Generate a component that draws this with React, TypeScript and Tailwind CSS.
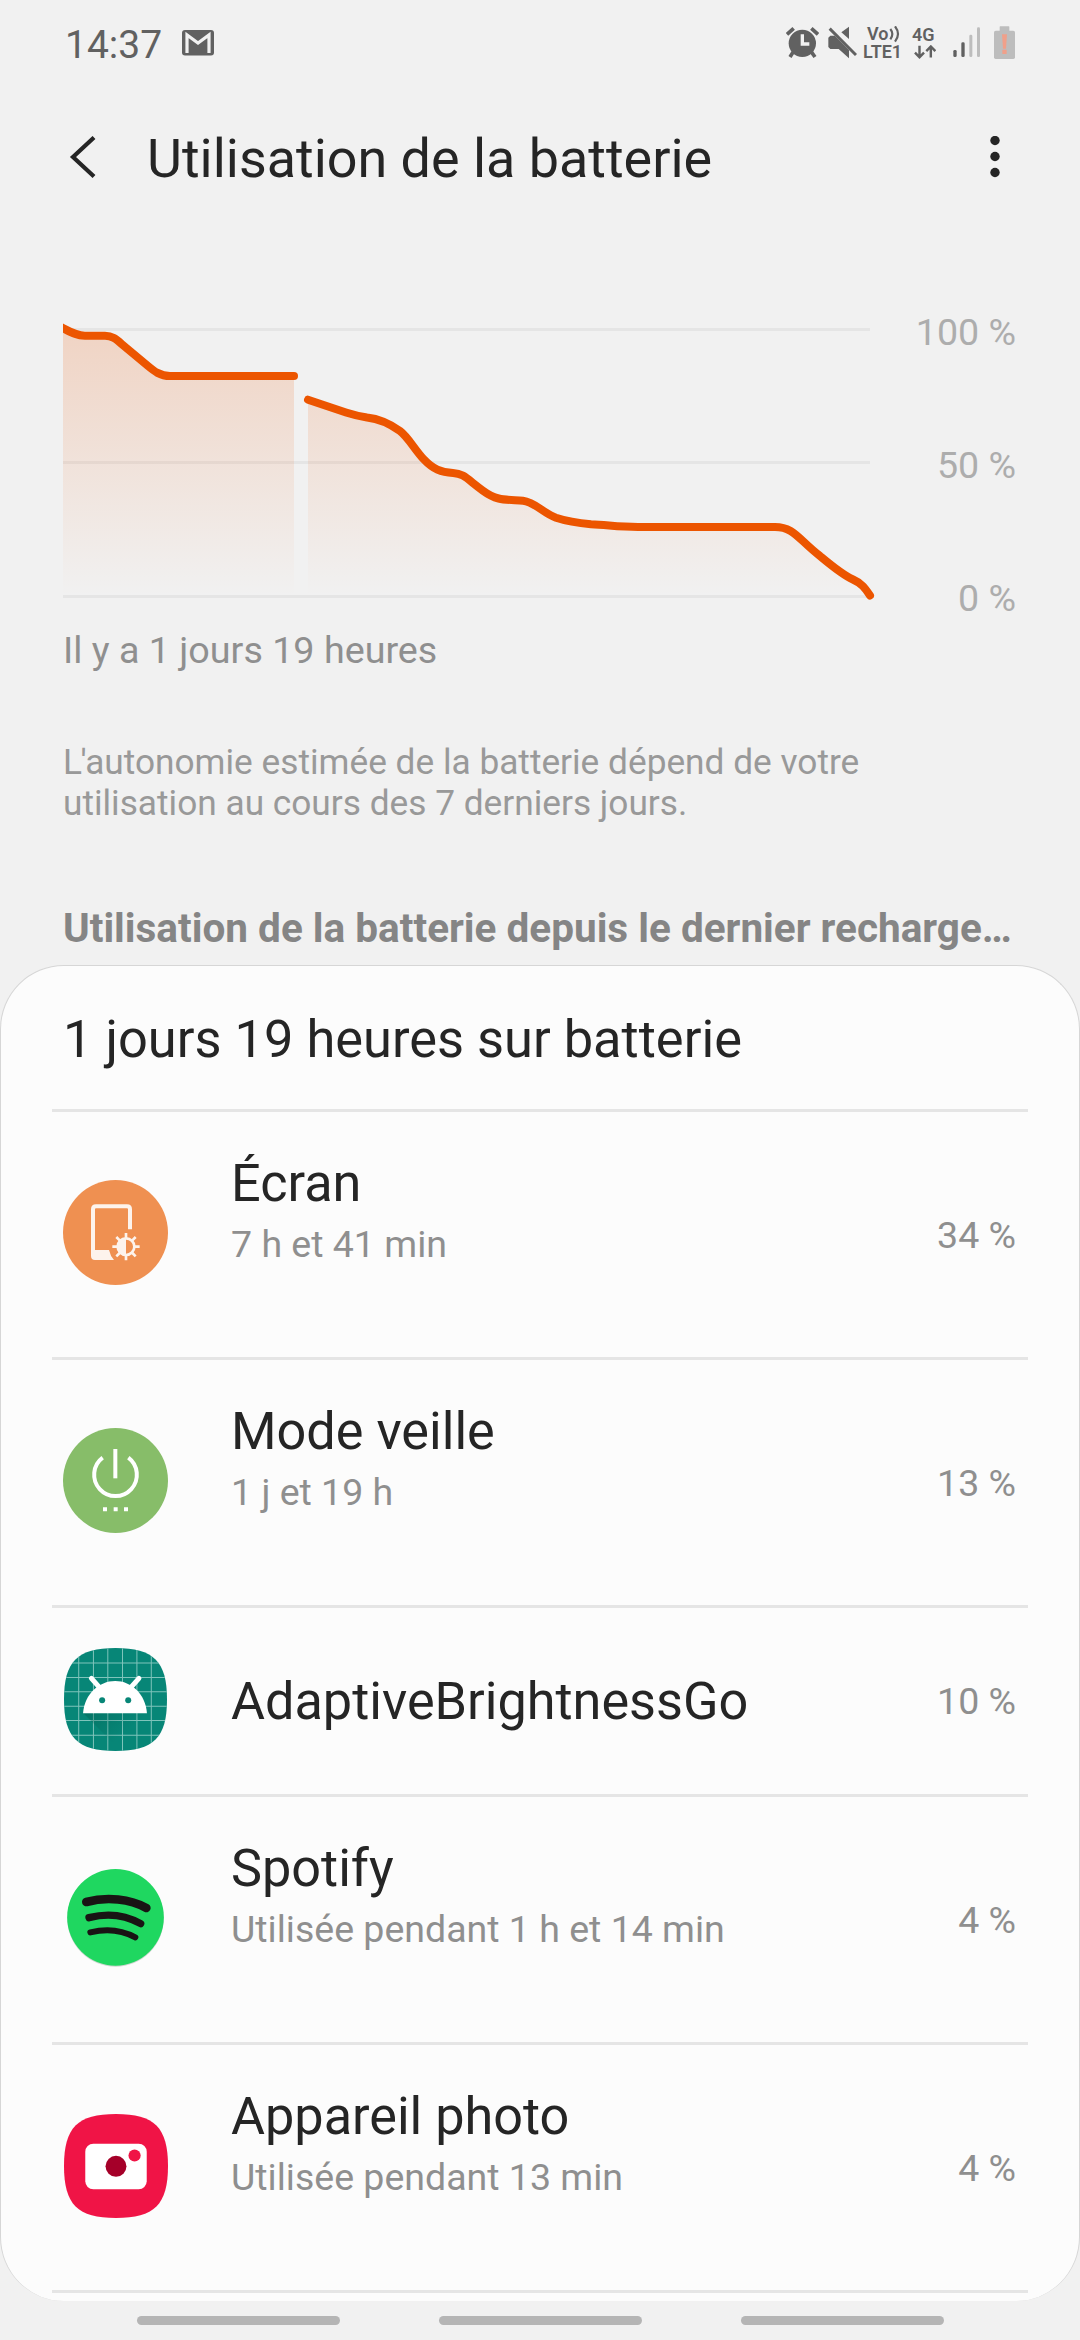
import type { ReactNode } from "react";

interface UsageItem {
  name: string;
  detail?: string;
  percent: string;
  icon: ReactNode;
}

const SQUIRCLE = "M154 0C268 0 308 40 308 154S268 308 154 308S0 268 0 154S40 0 154 0Z";

const ScreenIcon = () => (
  <svg width="105" height="105" viewBox="0 0 315 315" fill="none">
    <circle cx="157.5" cy="157.5" r="157.5" fill="#ef9051" />
    <path d="M201 148V88Q201 79 192 79H99Q90 79 90 88V228" stroke="#fdf3ec" strokeWidth="12" />
    <path d="M84 210H138Q142 228 153 240H96Q84 240 84 228Z" fill="#fdf3ec" />
    <g stroke="#fdf3ec" strokeWidth="8">
      <path d="M189 159V173M189 227V241M148 200H162M216 200H230M160 171L170 181M208 219L218 229M218 171L208 181M170 219L160 229" />
      <circle cx="189" cy="200" r="25" />
    </g>
    <path d="M189 175A25 25 0 0 0 189 225Z" fill="#fdf3ec" />
  </svg>
);

const StandbyIcon = () => (
  <svg width="105" height="105" viewBox="0 0 315 315" fill="none">
    <circle cx="157.5" cy="157.5" r="157.5" fill="#87bd69" />
    <path d="M157 63V151" stroke="#fff" strokeWidth="12" />
    <path d="M119 89A64 64 0 1 0 196 89" stroke="#fff" strokeWidth="12" />
    <path d="M120 238h12v12h-12zM152 238h12v12h-12zM183 238h12v12h-12z" fill="#fff" />
  </svg>
);

const AndroidIcon = () => (
  <svg width="103" height="103" viewBox="0 0 308 308" fill="none">
    <defs>
      <clipPath id="android-clip">
        <path d={SQUIRCLE} />
      </clipPath>
      <linearGradient id="android-shadow" x1="60" y1="195" x2="140" y2="290" gradientUnits="userSpaceOnUse">
        <stop stopColor="#00594c" stopOpacity="0.4" />
        <stop offset="1" stopColor="#00594c" stopOpacity="0" />
      </linearGradient>
    </defs>
    <g clipPath="url(#android-clip)">
      <rect width="308" height="308" fill="#078677" />
      <path
        d="M44 0V308M88 0V308M131 0V308M175 0V308M218 0V308M261 0V308M0 45H308M0 88H308M0 131H308M0 174H308M0 217H308M0 261H308"
        stroke="#7fc4bb"
        strokeWidth="3"
      />
      <path d="M58 195L170 308H308V256L248 195Z" fill="url(#android-shadow)" />
    </g>
    <path d="M57 195C61 139 104 99 153 99S244 139 248 195Z" fill="#fff" />
    <path d="M82 91L108 120M224 91L198 120" stroke="#fff" strokeWidth="15" strokeLinecap="round" />
    <circle cx="114" cy="156" r="9" fill="#078677" />
    <circle cx="192" cy="156" r="9" fill="#078677" />
  </svg>
);

const SpotifyIcon = () => (
  <svg width="97" height="99" viewBox="0 -3 291 297" fill="none">
    <circle cx="145.5" cy="148" r="145" fill="#cfd6d1" />
    <circle cx="145.5" cy="145" r="145" fill="#1fd760" />
    <g stroke="#191414" strokeLinecap="round">
      <path d="M58 99C120 82 190 90 238 117" strokeWidth="26" />
      <path d="M66 146C120 132 175 138 221 164" strokeWidth="22" />
      <path d="M70 190C118 178 165 183 205 205" strokeWidth="18" />
    </g>
  </svg>
);

const CameraIcon = () => (
  <svg width="104" height="104" viewBox="0 0 308 308">
    <path d={SQUIRCLE} fill="#f01446" />
    <rect x="63" y="88" width="182" height="135" rx="24" fill="#fff" />
    <circle cx="154" cy="155" r="31" fill="#a50029" />
    <circle cx="209" cy="123" r="18" fill="#f01446" />
  </svg>
);

const usageItems: UsageItem[] = [
  { name: "Écran", detail: "7 h et 41 min", percent: "34 %", icon: <ScreenIcon /> },
  { name: "Mode veille", detail: "1 j et 19 h", percent: "13 %", icon: <StandbyIcon /> },
  { name: "AdaptiveBrightnessGo", percent: "10 %", icon: <AndroidIcon /> },
  { name: "Spotify", detail: "Utilisée pendant 1 h et 14 min", percent: "4 %", icon: <SpotifyIcon /> },
  { name: "Appareil photo", detail: "Utilisée pendant 13 min", percent: "4 %", icon: <CameraIcon /> },
];

const StatusBar = () => (
  <div className="flex h-[88px] items-start justify-between pl-[65px] pr-[65px] text-[#616161]">
    <div className="flex items-start">
      <span className="mt-[22px] text-[39px] leading-[46px]">14:37</span>
      <svg className="ml-[20px] mt-[30px]" width="32" height="26" viewBox="0 0 32 26">
        <rect width="32" height="25.5" rx="3" fill="#616161" />
        <path d="M5 23V5L16 13L27 5V23" fill="none" stroke="#f1f1f1" strokeWidth="3.2" />
      </svg>
    </div>

    <div className="flex items-start pt-[26px]">
      {/* Alarm */}
      <svg width="33" height="33" viewBox="74 78 99 99" fill="none" stroke="#616161" strokeWidth="11">
        <circle cx="123" cy="130" r="41" fill="#616161" stroke="none" />
        <path d="M77 103L97 85M150 85L170 103M95 157L86 171M151 157L161 171" />
        <path d="M123 103V132H144" stroke="#f1f1f1" strokeWidth="10" />
      </svg>
      {/* Muted */}
      <svg className="ml-[9px]" width="29" height="33" viewBox="200 78 87 99" fill="#616161">
        <path d="M201 113L207 107H220L263 150V175L232 147H207L201 141ZM263 80V117L240 97Z" />
        <path d="M205 86L284 165" stroke="#616161" strokeWidth="9" />
      </svg>
      {/* VoLTE */}
      <div className="ml-[6px] flex w-[40px] flex-col text-[18px] font-semibold leading-[17.5px]">
        <div className="flex h-[17px] pl-[4px]">
          <span className="-mt-[1px]">Vo</span>
          <svg className="ml-[1px]" width="12" height="17" viewBox="378 78 36 51" fill="none" stroke="#616161" strokeWidth="6.5">
            <path d="M382 87Q394 102 382 118M396 79Q414 102 396 125" />
          </svg>
        </div>
        <span>LTE1</span>
      </div>
      {/* Mobile data */}
      <div className="ml-[9px] flex w-[26px] flex-col text-[18px] font-semibold leading-[17px]">
        <span className="h-[19px]">4G</span>
        <svg className="ml-[2px]" width="22" height="14" viewBox="460 135 68 42" fill="none" stroke="#616161" strokeWidth="7.5">
          <path d="M477 137V171M463 158L477 172L491 158M512 173V140M498 153L512 139L526 153" />
        </svg>
      </div>
      {/* Signal */}
      <svg className="ml-[15px]" width="28" height="33" viewBox="578 78 84 99">
        <rect x="579" y="150" width="10" height="21" rx="4" fill="#616161" />
        <rect x="603" y="127" width="10" height="44" rx="4" fill="#616161" />
        <rect x="627" y="104" width="9" height="67" rx="4" fill="#bdbdbd" />
        <rect x="650" y="82" width="9" height="89" rx="4" fill="#bdbdbd" />
      </svg>
      {/* Battery low */}
      <svg className="ml-[13px]" width="21" height="33" viewBox="702 78 63 99">
        <rect x="702" y="92" width="63" height="85" rx="5" fill="#bdbdbd" />
        <rect x="719" y="79" width="29" height="16" rx="2" fill="#bdbdbd" />
        <path d="M726 103H741L738 146H729ZM727 149H740V162H727Z" fill="#f0a08a" />
      </svg>
    </div>
  </div>
);

const Header = () => (
  <div className="flex h-[140px] items-center pl-[68px] pr-[80px]">
    <svg width="30" height="44" viewBox="0 0 30 44" fill="none" stroke="#252525" strokeWidth="4.2">
      <path d="M26 1.500L5 21L26 40.500" />
    </svg>
    <h1 className="ml-[49px] flex-1 pt-[2px] text-[53.9px] leading-[64px] text-[#252525]">Utilisation de la batterie</h1>
    <svg width="10" height="44" viewBox="0 0 10 44" fill="#252525">
      <circle cx="5" cy="4.500" r="4.700" />
      <circle cx="5" cy="20.500" r="4.700" />
      <circle cx="5" cy="36.500" r="4.700" />
    </svg>
  </div>
);

const FIRST_CURVE = "M-4 6C6 11 12 15.700 22 15.700H42C50 15.700 54 20 61 26L85 46C91 51 97 56 107 56H231";
const SECOND_CURVE =
  "M245 79.700L283 92.500Q294 96 304 97.500C318 99 330 106 337 111C345 117 352 130 361 139.500C370 149 378 152.500 390 153C401 153.500 404 159 420 170.700C434 181 442 179.500 460 180.700C472 182 480 193 493 197.700C503 201 514 203 528 204.300C545 205 555 207 575 207H712C731 207 735 219 757 236C769 246 779 254.500 790 259.500C799 263.500 802 268 807 275.500";

const BatteryChart = () => (
  <div className="flex h-[309px] justify-between pl-[63px] pr-[64px]">
    <svg className="mt-[11px]" width="815" height="284" viewBox="0 0 815 284" fill="none">
      <defs>
        <linearGradient id="area" x1="0" y1="8" x2="0" y2="276" gradientUnits="userSpaceOnUse">
          <stop stopColor="#ec5500" stopOpacity="0.19" />
          <stop offset="1" stopColor="#ec5500" stopOpacity="0" />
        </linearGradient>
      </defs>
      <path d="M0 9.500H807M0 142.500H807M0 276.500H807" stroke="#e5e5e5" strokeWidth="3" />
      <path d={`${FIRST_CURVE}V276H0Z`} fill="url(#area)" />
      <path d={`${SECOND_CURVE}V276H245Z`} fill="url(#area)" />
      <path d={FIRST_CURVE} stroke="#ec5500" strokeWidth="8" />
      <path d="M200 56H231" stroke="#ec5500" strokeWidth="8" strokeLinecap="round" />
      <path d={SECOND_CURVE} stroke="#ec5500" strokeWidth="8" strokeLinecap="round" />
    </svg>
    <div className="flex flex-col items-end text-[37.6px] leading-[46px] text-[#adadad]">
      <span className="h-[133px] shrink-0">100 %</span>
      <span className="h-[133px] shrink-0">50 %</span>
      <span className="shrink-0">0 %</span>
    </div>
  </div>
);

const UsageRow = ({ item }: { item: UsageItem }) => (
  <li className={`flex border-b-3 border-[#e5e5e5] pl-[11px] pr-[12px] ${item.detail ? "h-[248px]" : "h-[189px]"}`}>
    <div className={`flex w-[105px] items-center justify-center ${item.detail ? "h-[241px]" : "h-[183px]"}`}>
      {item.icon}
    </div>
    <div className={`ml-[63px] flex-1 ${item.detail ? "pt-[41px]" : "pt-[63px]"}`}>
      <p className="text-[52.2px] leading-[62px] text-[#252525]">{item.name}</p>
      {item.detail && <p className="mt-[6px] text-[37.5px] leading-[46px] text-[#8f8f8f]">{item.detail}</p>}
    </div>
    <span className="flex items-center text-[37.5px] leading-[46px] text-[#8f8f8f]">{item.percent}</span>
  </li>
);

const NavigationBar = () => (
  <div className="flex h-[39px] items-start justify-center gap-[99px] pt-[15px]">
    <div className="h-[9px] w-[203px] rounded-full bg-[#b5b5b5]" />
    <div className="h-[9px] w-[203px] rounded-full bg-[#b5b5b5]" />
    <div className="h-[9px] w-[203px] rounded-full bg-[#b5b5b5]" />
  </div>
);

const App = () => {
  return (
    <div className="flex h-[2340px] w-[1080px] flex-col overflow-hidden bg-[#f1f1f1] font-['Roboto',sans-serif]">
      <StatusBar />
      <Header />

      <div className="pt-[81px]">
        <BatteryChart />
      </div>
      <p className="pl-[63px] pt-[9px] text-[37.7px] leading-[46px] text-[#8f8f8f]">Il y a 1 jours 19 heures</p>

      <p className="mt-[69px] h-[82px] pl-[63px] text-[35.25px] leading-[41px] text-[#999999]">
        <span className="tracking-[-1.5px]">L'</span>autonomie estimée de la batterie dépend de votre
        <br />
        utilisation au cours des 7 derniers jours.
      </p>

      <h2 className="ml-[63px] mt-[81px] h-[60px] whitespace-nowrap text-[40.5px] font-bold leading-[46px] text-[#858585]">
        Utilisation de la batterie depuis le dernier recharge…
      </h2>

      <div className="h-[1336px] overflow-hidden rounded-[64px] border border-b-0 border-[#d6d6d6] bg-[#fcfcfc] px-[51px]">
        <div className="h-[146px] border-b-3 border-[#e5e5e5] pl-[11px] pt-[42px] text-[52.4px] leading-[62px] text-[#252525]">
          1 jours 19 heures sur batterie
        </div>
        <ul>
          {usageItems.map((item) => (
            <UsageRow key={item.name} item={item} />
          ))}
        </ul>
      </div>

      <NavigationBar />
    </div>
  );
};

export default App;
